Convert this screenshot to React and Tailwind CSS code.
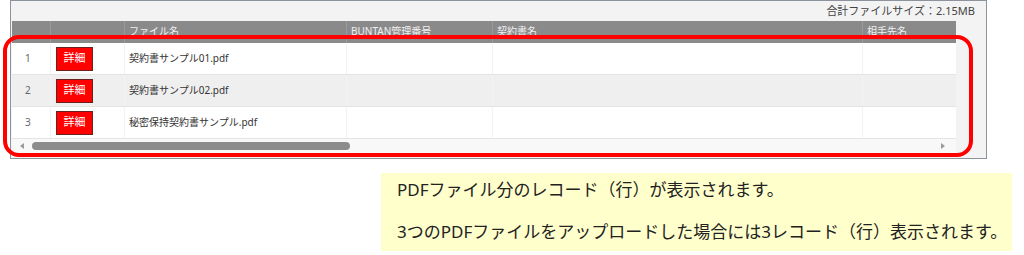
const rows = [
  { no: 1, name: "契約書サンプル01.pdf", bg: "bg-white" },
  { no: 2, name: "契約書サンプル02.pdf", bg: "bg-[#efefef]" },
  { no: 3, name: "秘密保持契約書サンプル.pdf", bg: "bg-white" },
];

const cols = ["w-[39px]", "w-[74px]", "w-[222px]", "w-[146px]", "w-[370px]", "w-[93px]"];

export default function App() {
  return (
    <div
      className="relative w-[1024px] h-[255px] bg-white overflow-hidden"
      style={{ fontFamily: '"Noto Sans", "Noto Sans CJK JP", sans-serif' }}
    >
      {/* 一覧パネル */}
      <div className="ml-[10px] w-[977px] h-[159px] border border-[#8c939c] bg-[#f3f3f3]">
        <div className="h-[20px] flex items-center justify-end pr-[11px] text-[11px] text-[#444]">
          合計ファイルサイズ：2.15MB
        </div>
        <div className="ml-[1px] w-[944px]">
          {/* ヘッダー */}
          <div className="flex h-[22px] bg-[#8a8a8a] text-[10px] text-[#f0f0f0]">
            {["", "", "ファイル名", "BUNTAN管理番号", "契約書名", "相手先名"].map((h, i) => (
              <div
                key={i}
                className={`${cols[i]} pl-[4px] pt-[3px] border-r border-[#9a9a9a] last:border-r-0`}
              >
                {h}
              </div>
            ))}
          </div>
          {/* 行 */}
          {rows.map((r) => (
            <div key={r.no} className={`flex h-[32px] border-b border-[#e4e4e4] ${r.bg} text-[10px] text-[#333]`}>
              <div className={`${cols[0]} flex items-center pl-[13px] text-[#666] border-r border-[#f3f3f3]`}>
                {r.no}
              </div>
              <div className={`${cols[1]} flex items-center pl-[5px] border-r border-[#f3f3f3]`}>
                <span className="w-[37px] h-[24px] flex items-center justify-center bg-[#ff0000] border border-[#6b2020] text-white text-[11px]">
                  詳細
                </span>
              </div>
              <div className={`${cols[2]} flex items-center pl-[4px] border-r border-[#f3f3f3]`}>{r.name}</div>
              <div className={`${cols[3]} border-r border-[#f3f3f3]`}></div>
              <div className={`${cols[4]} border-r border-[#f3f3f3]`}></div>
              <div className={cols[5]}></div>
            </div>
          ))}
          {/* スクロールバー */}
          <div className="flex items-center h-[14px] bg-[#f8f8f8]">
            <svg width="20" height="14" viewBox="0 0 20 14" className="shrink-0">
              <path d="M12 4 L8 7 L12 10 Z" fill="#9a9a9a" />
            </svg>
            <div className="w-[318px] h-[8px] rounded-full bg-[#8c8c8c]"></div>
            <div className="flex-1"></div>
            <svg width="14" height="14" viewBox="0 0 14 14" className="shrink-0 mr-[6px]">
              <path d="M5 4 L9 7 L5 10 Z" fill="#9a9a9a" />
            </svg>
          </div>
        </div>
      </div>

      {/* 赤枠 */}
      <div className="absolute left-[3px] top-[35px] w-[970px] h-[122px] border-[4px] border-[#ff0000] rounded-[16px] pointer-events-none"></div>

      {/* 説明 */}
      <div className="mt-[14px] ml-[381px] w-[631px] h-[78px] bg-[#ffffcc] pl-[16px] flex flex-col gap-[8px] text-[17px] text-[#222]">
        <div className="h-[34px] leading-[34px] whitespace-nowrap">PDFファイル分のレコード（行）が表示されます。</div>
        <div className="h-[34px] leading-[34px] whitespace-nowrap">3つのPDFファイルをアップロードした場合には3レコード（行）表示されます。</div>
      </div>
    </div>
  );
}
